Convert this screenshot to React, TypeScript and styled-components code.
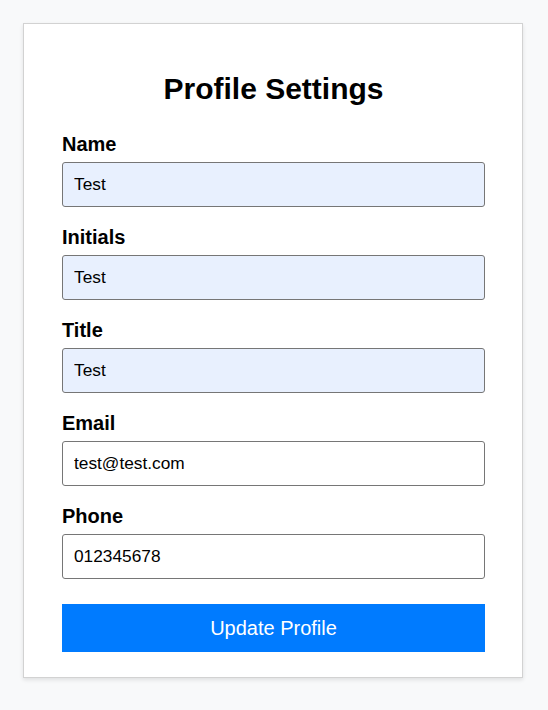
import React from "react";
import styled, { createGlobalStyle } from "styled-components";

const GlobalStyle = createGlobalStyle`
  html, body {
    margin: 0;
    padding: 0;
    background: #f8f9fa;
    font-family: "Liberation Sans", Arial, sans-serif;
  }
`;

const Page = styled.div`
  padding: 23px 25px 32px 23px;
`;

const Card = styled.div`
  box-sizing: border-box;
  width: 500px;
  background: #ffffff;
  border: 1px solid #d2d2d2;
  box-shadow: 0 2px 4px rgba(0, 0, 0, 0.1);
  padding: 48px 37px 25px 38px;
`;

const Title = styled.h2`
  margin: 0 0 27px;
  text-align: center;
  font-size: 30px;
  font-weight: bold;
  color: #000;
`;

const Field = styled.div`
  display: flex;
  flex-direction: column;
  margin-bottom: 19px;
`;

const Label = styled.label`
  font-size: 20px;
  font-weight: bold;
  color: #000;
  margin-bottom: 6px;
`;

const Input = styled.input<{ $filled?: boolean }>`
  box-sizing: border-box;
  width: 100%;
  height: 45px;
  padding: 0 11px;
  font-family: "Liberation Sans", Arial, sans-serif;
  font-size: 17.3px;
  color: #000;
  background: ${(p) => (p.$filled ? "#e8f0fe" : "#ffffff")};
  border: 1px solid #767676;
  border-radius: 3px;
  outline: none;
`;

const Button = styled.button`
  box-sizing: border-box;
  width: 100%;
  height: 48px;
  margin-top: 6px;
  border: none;
  border-radius: 0;
  background: #007bff;
  color: #fff;
  font-family: "Liberation Sans", Arial, sans-serif;
  font-size: 20px;
  cursor: pointer;
`;

const fields = [
  { label: "Name", value: "Test", filled: true },
  { label: "Initials", value: "Test", filled: true },
  { label: "Title", value: "Test", filled: true },
  { label: "Email", value: "test@test.com", filled: false },
  { label: "Phone", value: "012345678", filled: false },
];

export default function App() {
  return (
    <>
      <GlobalStyle />
      <Page>
        <Card>
          <Title>Profile Settings</Title>
          {fields.map((f) => (
            <Field key={f.label}>
              <Label>{f.label}</Label>
              <Input $filled={f.filled} defaultValue={f.value} />
            </Field>
          ))}
          <Button>Update Profile</Button>
        </Card>
      </Page>
    </>
  );
}
